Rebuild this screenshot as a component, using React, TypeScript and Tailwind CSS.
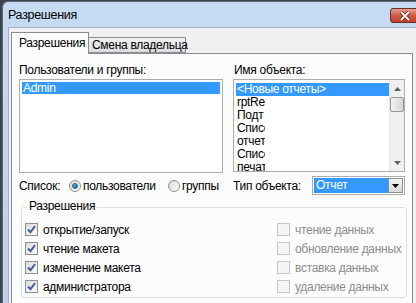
import React from 'react';

const font = { fontFamily: '"Liberation Sans", "Noto Sans", sans-serif' };

const objects = ['rptRe', 'Подт', 'Списс', 'отчет', 'Списс', 'печат'];
const leftChecks = ['открытие/запуск', 'чтение макета', 'изменение макета', 'администратора'];
const rightChecks = ['чтение данных', 'обновление данных', 'вставка данных', 'удаление данных'];

function CheckBox({ checked, disabled }: { checked?: boolean; disabled?: boolean }) {
  return (
    <div
      className={
        disabled
          ? 'w-[13px] h-[13px] border border-[#c5c5c5] bg-[#f5f5f5] shrink-0'
          : 'w-[13px] h-[13px] border border-[#8e8f8f] bg-gradient-to-br from-[#dcdcdc] to-[#fafafa] shrink-0 flex items-center justify-center'
      }
    >
      {checked && (
        <svg width="11" height="11" viewBox="0 0 11 11">
          <path d="M2 5.5 L4.5 8.2 L9 2.2" fill="none" stroke="#4a5f97" strokeWidth="2" />
        </svg>
      )}
    </div>
  );
}

function Radio({ on }: { on?: boolean }) {
  return (
    <div className="w-[12px] h-[12px] rounded-full border border-[#8e8f8f] bg-gradient-to-br from-[#dcdcdc] to-[#fbfbfb] flex items-center justify-center shrink-0">
      {on && <div className="w-[6px] h-[6px] rounded-full bg-gradient-to-br from-[#6ab9e8] to-[#0f5e96] border border-[#2a5f8a]" />}
    </div>
  );
}

export default function App() {
  return (
    <div className="w-[416px] h-[303px] overflow-hidden bg-[#3c4450] pl-[2px] pt-[1px] text-[12px] tracking-[-0.3px] text-black whitespace-nowrap" style={font}>
      <div className="h-[310px] rounded-tl-[6px] border-l border-t border-[#5d6977] bg-gradient-to-b from-[#c7dbf2] to-[#b9d1ea] flex flex-col">
        {/* title bar */}
        <div className="h-[25px] flex items-center pl-[5px] relative shrink-0">
          <span className="text-[12.5px] leading-none mt-[1px]">Разрешения</span>
          <div className="absolute left-[387px] top-[6px] w-[30px] h-[15px] rounded-[3px] border border-[#6d2b22] bg-gradient-to-b from-[#e5a091] via-[#cd5a45] to-[#c1412b] flex items-center justify-center">
            <svg width="12" height="10" viewBox="0 0 12 10">
              <path d="M2 1 L10 9 M10 1 L2 9" stroke="#5a1a10" strokeWidth="3.4" />
              <path d="M2 1 L10 9 M10 1 L2 9" stroke="#ffffff" strokeWidth="2" />
            </svg>
          </div>
        </div>
        {/* client */}
        <div className="ml-[5px] flex-1 bg-[#f0f0f0] border-l border-t border-[#a3b1c2] pl-[2px] pt-[4px]">
          {/* tabs */}
          <div className="flex items-end h-[21px] relative z-10">
            <div className="w-[78px] h-[22px] border border-[#898c95] border-b-0 bg-[#fcfcfc] pl-[7px] pt-[2px] leading-[16px] mb-[-1px]">
              Разрешения
            </div>
            <div className="w-[97px] h-[16px] border border-[#898c95] border-l-0 bg-gradient-to-b from-[#f2f2f2] to-[#dcdcdc] pl-[3px] leading-[14px]">
              Смена владельца
            </div>
          </div>
          {/* panel */}
          <div className="w-[402px] h-[260px] border border-[#898c95] bg-[#fcfcfc] pl-[7px] pt-[8px]">
            <div className="flex gap-[10px]">
              <div className="flex flex-col">
                <div className="h-[17px] leading-[17px]">Пользователи и группы:</div>
                <div className="w-[204px] h-[94px] border border-[#abadb3] bg-white p-[2px]">
                  <div className="h-[12px] leading-[12px] bg-[#3399ff] text-white pl-[1px]">Admin</div>
                </div>
              </div>
              <div className="flex flex-col">
                <div className="h-[17px] leading-[17px] pl-[1px]">Имя объекта:</div>
                <div className="w-[172px] h-[93px] border border-[#abadb3] bg-white flex">
                  <div className="flex-1 pt-[3px] pl-[2px]">
                    <div className="h-[13px] leading-[12px] bg-[#3399ff] text-white pl-[1px] w-[153px]">&lt;Новые отчеты&gt;</div>
                    {objects.map((o, i) => (
                      <div key={i} className="h-[13px] leading-[13px] flex pl-[1px] w-[153px]">
                        <span className="w-[28px] overflow-hidden">{o}</span>
                        {i === 3 && <span className="ml-auto mr-[-3px] w-[3px] overflow-hidden">г</span>}
                      </div>
                    ))}
                  </div>
                  <div className="w-[16px] bg-[#f0f0f0] border-l border-[#e6e6e6] flex flex-col items-center">
                    <div className="h-[17px] flex items-center justify-center">
                      <svg width="7" height="4" viewBox="0 0 7 4"><path d="M0 4 L3.5 0 L7 4 Z" fill="#606060" /></svg>
                    </div>
                    <div className="w-[14px] h-[15px] rounded-[2px] border border-[#979797] bg-gradient-to-r from-[#f2f2f2] to-[#d6d6d6]" />
                    <div className="flex-1" />
                    <div className="h-[17px] flex items-center justify-center">
                      <svg width="7" height="4" viewBox="0 0 7 4"><path d="M0 0 L3.5 4 L7 0 Z" fill="#606060" /></svg>
                    </div>
                  </div>
                </div>
              </div>
            </div>
            {/* list type row */}
            <div className="flex items-center h-[19px] mt-[3px]">
              <span className="w-[50px]">Список:</span>
              <Radio on />
              <span className="ml-[2px] w-[85px]">пользователи</span>
              <Radio />
              <span className="ml-[2px] w-[51px]">группы</span>
              <span className="w-[79px]">Тип объекта:</span>
              <div className="w-[93px] h-[19px] border border-[#abadb3] bg-white flex p-[1px]">
                <div className="flex-1 bg-[#3399ff] text-white leading-[15px] pl-[2px]">Отчет</div>
                <div className="w-[15px] border border-[#8d8d8d] bg-gradient-to-b from-[#f3f3f3] to-[#d9d9d9] flex items-center justify-center">
                  <svg width="7" height="4" viewBox="0 0 7 4"><path d="M0 0 L3.5 4 L7 0 Z" fill="#000" /></svg>
                </div>
              </div>
            </div>
            {/* permissions group */}
            <div className="relative mt-[12px] ml-[2px] w-[386px] h-[91px] border border-[#d5dfe5] rounded-[3px] pl-[3px] pt-[12px]">
              <span className="absolute left-[5px] top-[-10px] px-[2px] bg-[#fcfcfc] leading-[16px]">Разрешения</span>
              <div className="flex">
                <div className="w-[252px] flex flex-col">
                  {leftChecks.map((c) => (
                    <div key={c} className="h-[19px] flex items-center gap-[5px]">
                      <CheckBox checked />
                      <span>{c}</span>
                    </div>
                  ))}
                </div>
                <div className="flex flex-col text-[#8d8d8d]">
                  {rightChecks.map((c) => (
                    <div key={c} className="h-[19px] flex items-center gap-[5px]">
                      <CheckBox disabled />
                      <span>{c}</span>
                    </div>
                  ))}
                </div>
              </div>
            </div>
          </div>
        </div>
      </div>
    </div>
  );
}
